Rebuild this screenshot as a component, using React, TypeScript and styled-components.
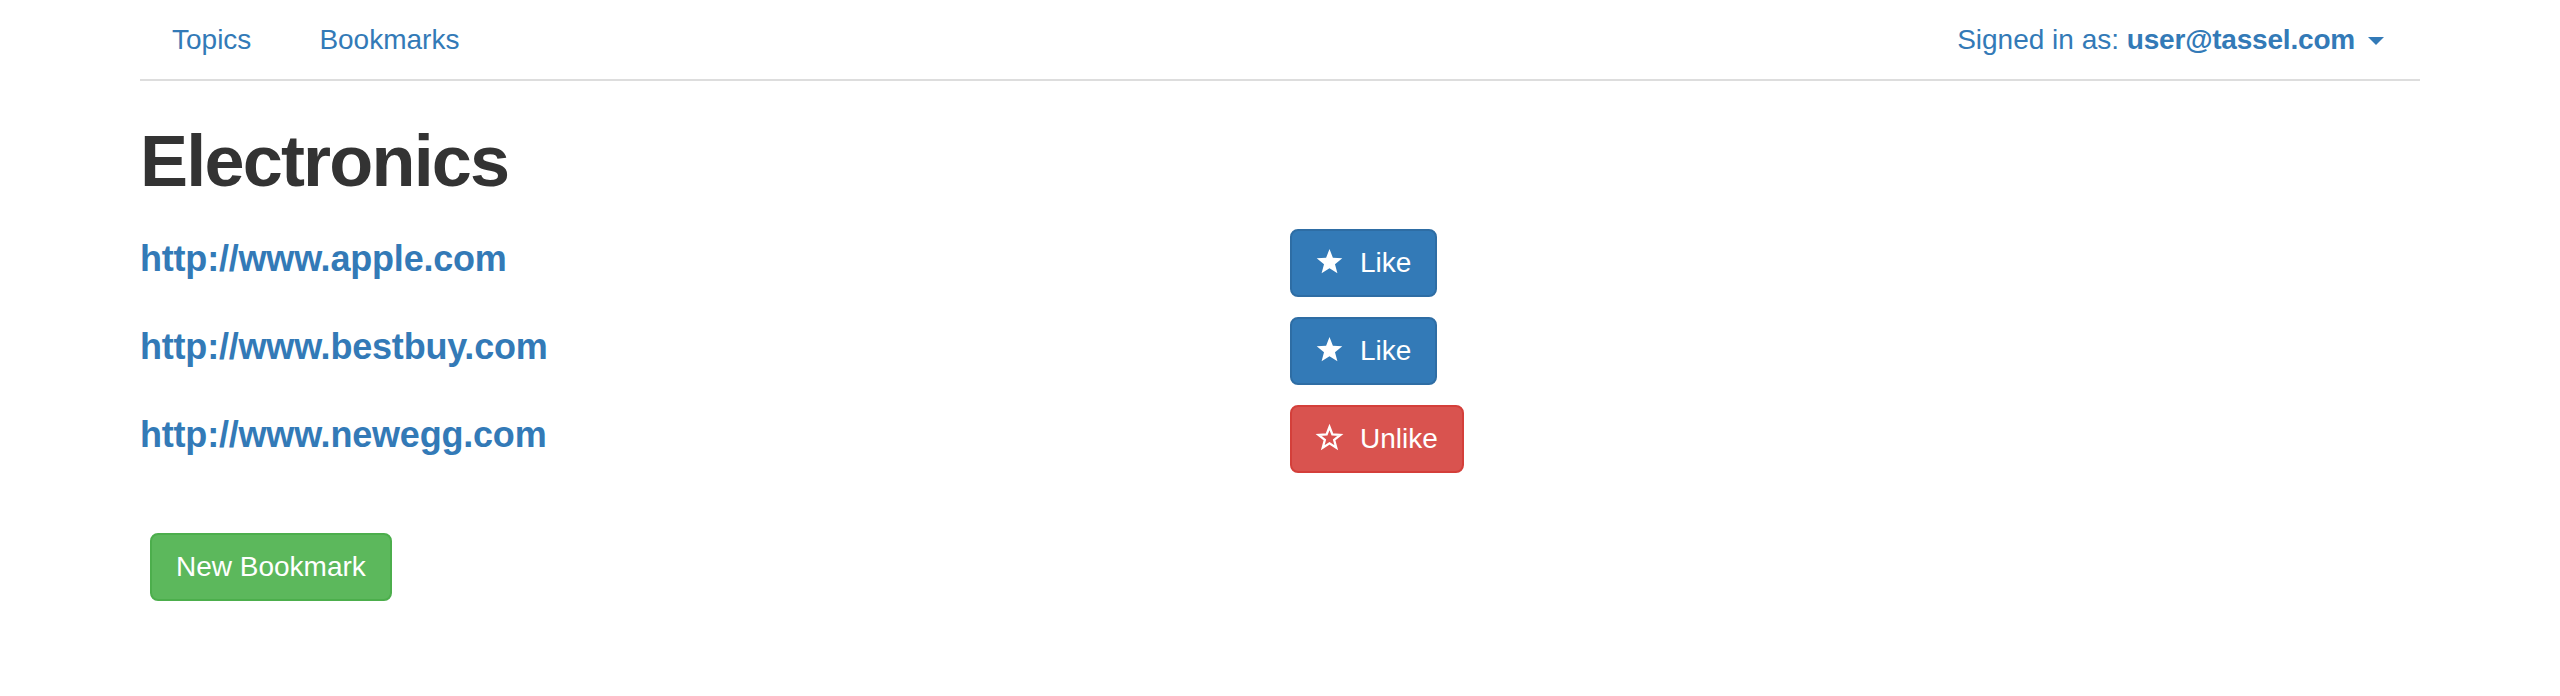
import React from "react";
import styled, { createGlobalStyle } from "styled-components";

const GlobalStyle = createGlobalStyle`
  html, body { margin: 0; padding: 0; background: #fff; }
  body {
    font-family: "Liberation Sans", Arial, Helvetica, sans-serif;
    font-size: 28px;
    line-height: 1.42857;
    color: #333;
  }
  * { box-sizing: border-box; }
`;

const Container = styled.div`
  width: 2280px;
  margin: 0 auto;
`;

const Nav = styled.nav`
  display: flex;
  justify-content: space-between;
  align-items: stretch;
  height: 81px;
  border-bottom: 2px solid #ddd;
`;

const NavGroup = styled.ul`
  display: flex;
  list-style: none;
  margin: 0;
  padding: 0;
`;

const NavLink = styled.a`
  display: inline-flex;
  align-items: center;
  height: 79px;
  line-height: 77px;
  padding: 0 32px;
  margin-right: 4px;
  color: #337ab7;
  text-decoration: none;
  font-size: 28px;
  white-space: pre;
  cursor: pointer;
`;

const Strong = styled.strong`
  font-weight: 700;
  letter-spacing: -0.2px;
`;

const Caret = styled.span`
  display: inline-block;
  width: 0;
  height: 0;
  margin-left: 13px;
  border-top: 8px solid #337ab7;
  border-left: 8px solid transparent;
  border-right: 8px solid transparent;
  position: relative;
  top: 1px;
`;

const Title = styled.h1`
  margin: 41px 0 0;
  font-size: 72px;
  line-height: 1.1;
  font-weight: 700;
  letter-spacing: -1.8px;
  color: #333;
`;

const List = styled.div`
  display: flex;
  flex-direction: column;
  gap: 20px;
  margin-top: 28px;
`;

const Row = styled.div`
  display: grid;
  grid-template-columns: 1150px auto;
  align-items: start;
  height: 68px;
`;

const SiteLink = styled.a`
  display: block;
  margin: 10px 0 0;
  font-size: 36px;
  line-height: 1.1;
  font-weight: 700;
  letter-spacing: -0.2px;
  color: #337ab7;
  text-decoration: none;
`;

const variants = {
  primary: { bg: "#337ab7", border: "#2e6da4" },
  danger: { bg: "#d9534f", border: "#d43f3a" },
  success: { bg: "#5cb85c", border: "#4cae4c" },
};

const Button = styled.button<{ $variant: keyof typeof variants }>`
  display: inline-flex;
  align-items: center;
  justify-self: start;
  height: 68px;
  padding: 0 24px;
  border: 2px solid ${(p) => variants[p.$variant].border};
  border-radius: 8px;
  background: ${(p) => variants[p.$variant].bg};
  color: #fff;
  font-family: "Liberation Sans", Arial, Helvetica, sans-serif;
  font-size: 28px;
  line-height: 40px;
  cursor: pointer;
  white-space: nowrap;
`;

const StarIcon = styled.svg`
  width: 27px;
  height: 25px;
  margin-right: 17px;
  margin-bottom: 4px;
  flex: none;
  overflow: visible;
`;

const NewButton = styled(Button)`
  margin: 60px 0 0 10px;
`;

const STAR =
  "14,0 17.53,9.15 27.31,9.67 19.71,15.85 22.23,25.33 14,20 5.77,25.33 8.29,15.85 0.69,9.67 10.47,9.15";
const STAR_OUTLINE =
  "14,2.1 17,9.88 25.31,10.32 18.85,15.57 21,23.63 14,19.1 7,23.63 9.15,15.57 2.69,10.32 11,9.88";

const Star: React.FC<{ filled: boolean }> = ({ filled }) => (
  <StarIcon viewBox="0 0 28 26">
    {filled ? (
      <polygon points={STAR} fill="#fff" />
    ) : (
      <polygon points={STAR_OUTLINE} fill="none" stroke="#fff" strokeWidth={2.4} strokeLinejoin="miter" />
    )}
  </StarIcon>
);

const bookmarks = [
  { url: "http://www.apple.com", liked: false },
  { url: "http://www.bestbuy.com", liked: false },
  { url: "http://www.newegg.com", liked: true },
];

export default function App() {
  return (
    <>
      <GlobalStyle />
      <Container>
        <Nav>
          <NavGroup>
            <li>
              <NavLink>Topics</NavLink>
            </li>
            <li>
              <NavLink>Bookmarks</NavLink>
            </li>
          </NavGroup>
          <NavGroup>
            <li>
              <NavLink>
                {"Signed in as: "}
                <Strong>user@tassel.com</Strong>
                <Caret />
              </NavLink>
            </li>
          </NavGroup>
        </Nav>
        <Title>Electronics</Title>
        <List>
          {bookmarks.map((b) => (
            <Row key={b.url}>
              <SiteLink href="#">{b.url}</SiteLink>
              <Button $variant={b.liked ? "danger" : "primary"}>
                <Star filled={!b.liked} />
                {b.liked ? "Unlike" : "Like"}
              </Button>
            </Row>
          ))}
        </List>
        <NewButton $variant="success">New Bookmark</NewButton>
      </Container>
    </>
  );
}
